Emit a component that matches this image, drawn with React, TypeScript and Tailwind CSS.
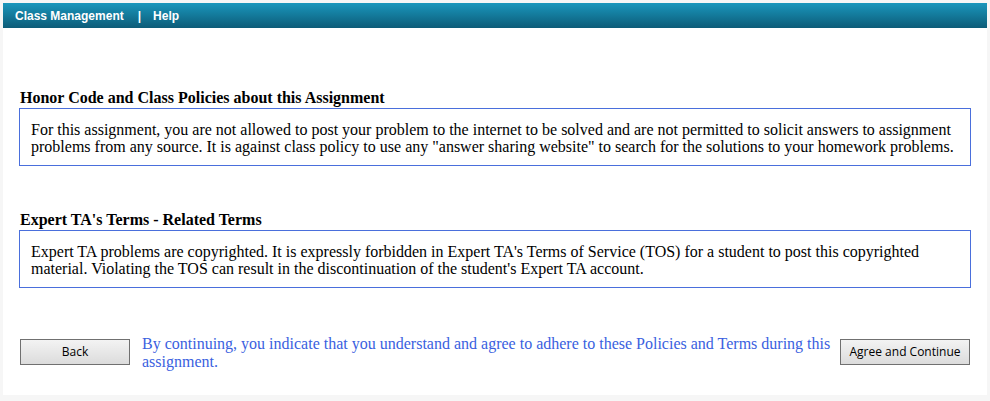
import React from "react";

export default function App() {
  const serif = { fontFamily: '"Liberation Serif", "Times New Roman", serif' };
  return (
    <div className="w-[990px] h-[401px] bg-[#f6f6f6] pl-[3px] pr-[3px] pt-[3px] overflow-hidden">
      <div className="bg-white h-[392px]">
        <div className="h-[25px] bg-gradient-to-b from-[#1a97bd] to-[#0d5c78] flex items-center pl-[12px] text-white font-bold text-[12px] [font-family:'Liberation_Sans',Arial,sans-serif]">
          <span>Class Management</span>
          <span className="ml-[14px]">|</span>
          <span className="ml-[12px]">Help</span>
        </div>
        <div className="px-[16px] text-black" style={serif}>
          <h2 className="mt-[61px] font-bold text-[16px] leading-[18px] pl-[1px]">Honor Code and Class Policies about this Assignment</h2>
          <div className="mt-[1px] border border-[#4a6fdc] pl-[11px] pr-[8px] pt-[12px] pb-[10px] text-[16px] leading-[17px] w-[952px]">
            For this assignment, you are not allowed to post your problem to the internet to be solved and are not permitted to solicit answers to assignment problems from any source. It is against class policy to use any "answer sharing website" to search for the solutions to your homework problems.
          </div>
          <h2 className="mt-[45px] font-bold text-[16px] leading-[18px] pl-[1px]">Expert TA's Terms - Related Terms</h2>
          <div className="mt-[1px] border border-[#4a6fdc] pl-[11px] pr-[8px] pt-[12px] pb-[10px] text-[16px] leading-[17px] w-[952px]">
            Expert TA problems are copyrighted. It is expressly forbidden in Expert TA's Terms of Service (TOS) for a student to post this copyrighted material. Violating the TOS can result in the discontinuation of the student's Expert TA account.
          </div>
          <div className="mt-[47px] flex items-start pl-[1px] w-[951px]">
            <button className="mt-[4px] w-[110px] h-[26px] border border-[#707070] bg-gradient-to-b from-[#f3f3f3] to-[#dcdcdc] text-[12px] text-black [font-family:'Open_Sans',sans-serif]">
              Back
            </button>
            <p className="ml-[12px] w-[690px] text-[16px] leading-[18px] text-[#3a5fe0]">
              By continuing, you indicate that you understand and agree to adhere to these Policies and Terms during this assignment.
            </p>
            <button className="ml-auto mt-[4px] w-[130px] h-[26px] border border-[#707070] bg-gradient-to-b from-[#f3f3f3] to-[#dcdcdc] text-[12px] text-black [font-family:'Open_Sans',sans-serif]">
              Agree and Continue
            </button>
          </div>
        </div>
      </div>
    </div>
  );
}
